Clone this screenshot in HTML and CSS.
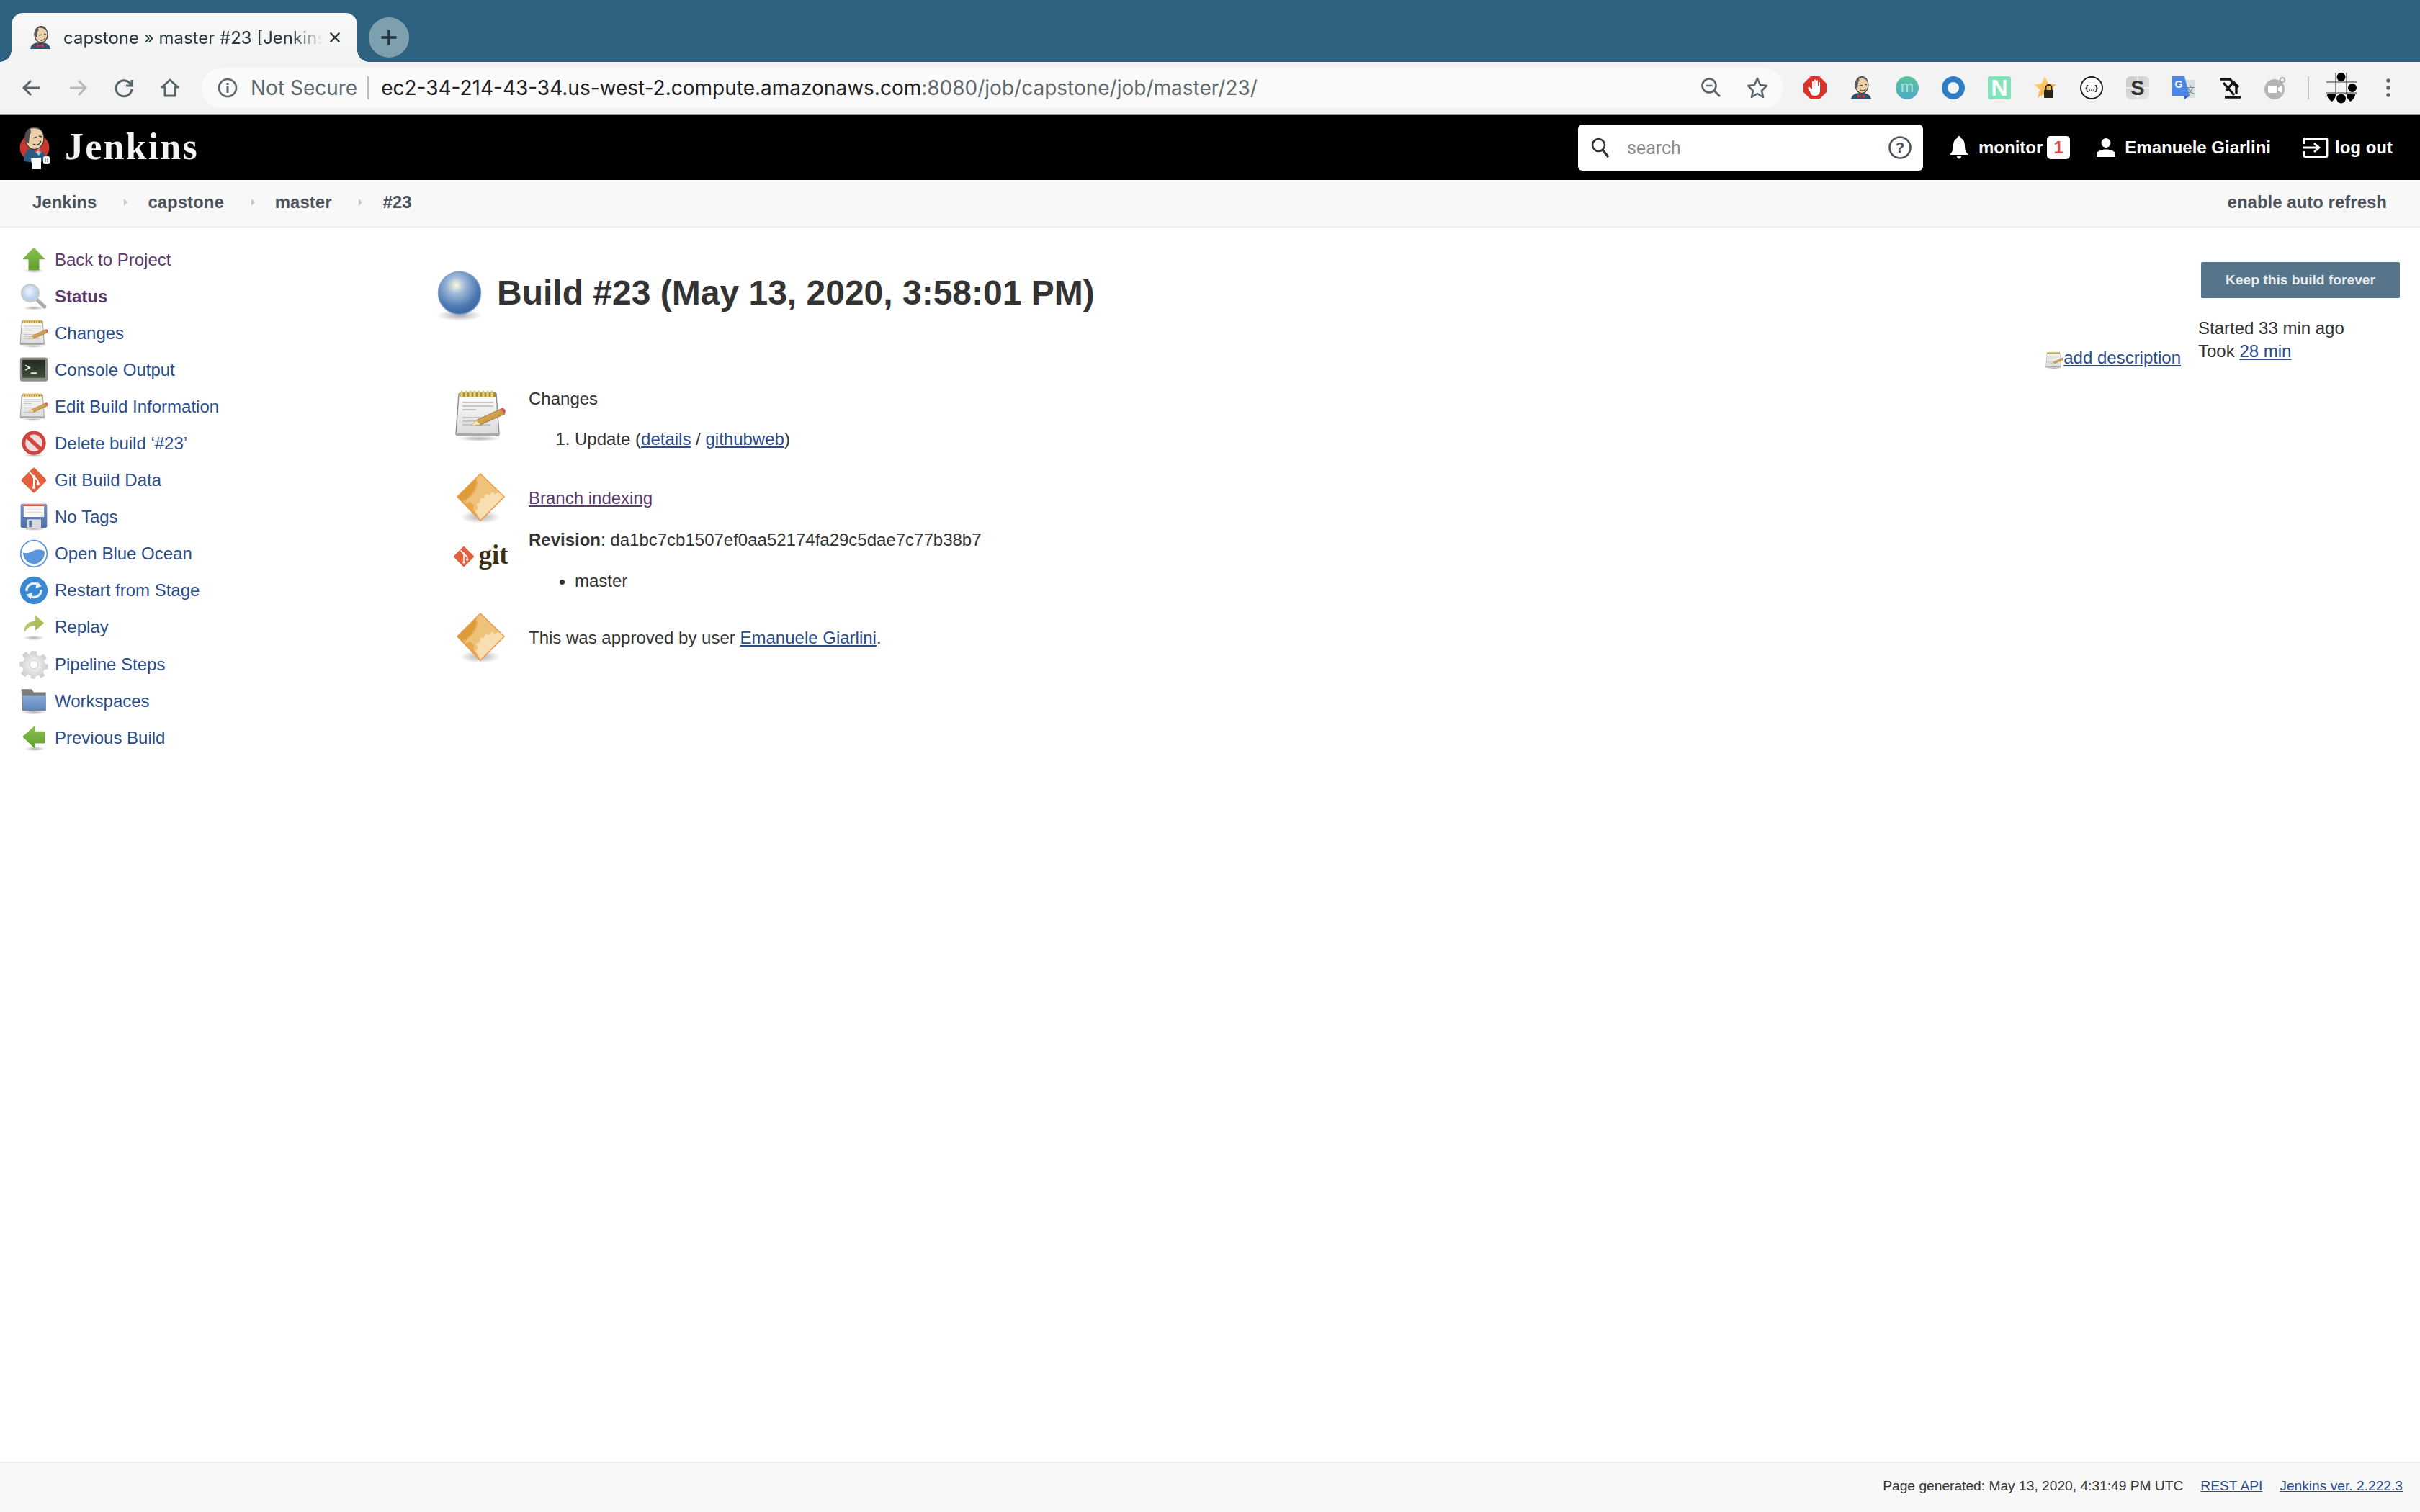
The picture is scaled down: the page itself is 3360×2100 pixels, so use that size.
FILE: index.html
```html
<!DOCTYPE html>
<html lang="en">
<head>
<meta charset="utf-8">
<title>capstone » master #23 [Jenkins]</title>
<link rel="stylesheet" href="styles.css">
</head>
<body>
<svg class="defs" aria-hidden="true">
  <defs>
    <linearGradient id="gGreen" x1="0" y1="0" x2="0" y2="1"><stop offset="0" stop-color="#8cc152"/><stop offset="1" stop-color="#5fa02c"/></linearGradient>
    <linearGradient id="gPad" x1="0" y1="0" x2="0" y2="1"><stop offset="0" stop-color="#fdfdfd"/><stop offset="1" stop-color="#dcdcdc"/></linearGradient>
    <linearGradient id="gPencil" x1="0" y1="0" x2="1" y2="1"><stop offset="0" stop-color="#eec36c"/><stop offset="1" stop-color="#b57f2c"/></linearGradient>
    <linearGradient id="gScreen" x1="0" y1="0" x2="0" y2="1"><stop offset="0" stop-color="#1f2a1c"/><stop offset="1" stop-color="#3f4f38"/></linearGradient>
    <linearGradient id="gFloppy" x1="0" y1="0" x2="0" y2="1"><stop offset="0" stop-color="#7391c4"/><stop offset="1" stop-color="#4d6ea8"/></linearGradient>
    <linearGradient id="gFolder" x1="0" y1="0" x2="0" y2="1"><stop offset="0" stop-color="#87a9d8"/><stop offset="1" stop-color="#5f86bd"/></linearGradient>
    <linearGradient id="gReplay" x1="0" y1="0" x2="1" y2="1"><stop offset="0" stop-color="#c9d77f"/><stop offset="1" stop-color="#94ad3c"/></linearGradient>
    <linearGradient id="gTeal" x1="0" y1="0" x2="0" y2="1"><stop offset="0" stop-color="#5cc3a0"/><stop offset="1" stop-color="#4fa9c6"/></linearGradient>
    <linearGradient id="gStar" x1="0" y1="0" x2="1" y2="1"><stop offset="0" stop-color="#fde08a"/><stop offset="1" stop-color="#f0a029"/></linearGradient>
    <linearGradient id="gSnag" x1="0" y1="0" x2="1" y2="1"><stop offset="0" stop-color="#c9c9c9"/><stop offset="1" stop-color="#e6e6e6"/></linearGradient>
    <radialGradient id="gBall" cx="0.42" cy="0.32" r="0.7"><stop offset="0" stop-color="#fbf9dd"/><stop offset="0.3" stop-color="#9db8d8"/><stop offset="0.75" stop-color="#4a77b0"/><stop offset="1" stop-color="#3a66a4"/></radialGradient>
    <radialGradient id="gGlass" cx="0.45" cy="0.4" r="0.6"><stop offset="0" stop-color="#eef5fc"/><stop offset="1" stop-color="#a9c6e8"/></radialGradient>
    <radialGradient id="gGear" cx="0.5" cy="0.5" r="0.6"><stop offset="0" stop-color="#f8f8f8"/><stop offset="1" stop-color="#c9c9c9"/></radialGradient>
    <radialGradient id="gShadow" cx="0.5" cy="0.5" r="0.5"><stop offset="0" stop-color="#000" stop-opacity=".32"/><stop offset="1" stop-color="#000" stop-opacity="0"/></radialGradient>

    <symbol id="i-up" viewBox="0 0 48 48"><ellipse cx="24" cy="42" rx="17" ry="4" fill="url(#gShadow)"/><path d="M24 3 43 23H33V41H15V23H5Z" fill="url(#gGreen)"/></symbol>
    <symbol id="i-left" viewBox="0 0 48 48"><ellipse cx="26" cy="42" rx="17" ry="4" fill="url(#gShadow)"/><path d="M5 22 26 3V13H42V33H26V42Z" fill="url(#gGreen)"/></symbol>
    <symbol id="i-search" viewBox="0 0 48 48"><ellipse cx="24" cy="43" rx="18" ry="3.5" fill="url(#gShadow)"/><path d="M27 27 42 41" stroke="#a6a9ac" stroke-width="6" stroke-linecap="round"/><circle cx="18" cy="18" r="14" fill="url(#gGlass)" stroke="#c9cdd2" stroke-width="3.5"/></symbol>
    <symbol id="i-notepad" viewBox="0 0 72 72"><ellipse cx="34" cy="68" rx="30" ry="4" fill="url(#gShadow)"/><path d="M6 6H58L62 62H2Z" fill="url(#gPad)" stroke="#8b8b8b" stroke-width="1.4"/><rect x="2" y="60" width="60" height="5" fill="#a9a9a9"/><rect x="7" y="4" width="50" height="6" fill="#a98d3d"/><path d="M10 3V9M16 3V9M22 3V9M28 3V9M34 3V9M40 3V9M46 3V9M52 3V9" stroke="#e9cf6f" stroke-width="3.4" stroke-linecap="round"/><path d="M11 18H54M11 23H54M11 28H30M11 39H50M11 44H30M11 49H50" stroke="#b9b9b9" stroke-width="1.4"/><path d="M23 50 30 43 64 27 70 34 36 49Z" fill="url(#gPencil)" stroke="#8d6a2a" stroke-width=".8"/><path d="M23 50 30 43 36 49Z" fill="#f4dfb7"/><path d="M64 27 70 34 71 29 67 25Z" fill="#e0524d"/></symbol>
    <symbol id="i-term" viewBox="0 0 48 48"><rect x="1" y="3" width="46" height="40" rx="4" fill="#8d8f88"/><rect x="5" y="7" width="38" height="30" fill="url(#gScreen)"/><path d="M10 16 17 20 10 24M19 29H29" stroke="#e6ebe3" stroke-width="2.2" fill="none"/><circle cx="32" cy="40" r="1" fill="#8ad45a"/></symbol>
    <symbol id="i-delete" viewBox="0 0 48 48"><ellipse cx="24" cy="44" rx="18" ry="3" fill="url(#gShadow)"/><circle cx="24" cy="23" r="17" fill="#f3dddc" stroke="#cf4641" stroke-width="6"/><path d="M12 12 36 34" stroke="#cf4641" stroke-width="6.5"/></symbol>
    <symbol id="i-git" viewBox="0 0 48 48"><rect x="8.5" y="8.5" width="31" height="31" rx="3" transform="rotate(45 24 24)" fill="#e2603e"/><path d="M17 11 31 25M24 18V35M31 25V30" stroke="#fff" stroke-width="2.4" fill="none"/><circle cx="24" cy="18" r="2.6" fill="#fff"/><circle cx="24" cy="36" r="2.6" fill="#fff"/><circle cx="31" cy="30" r="2.6" fill="#fff"/></symbol>
    <symbol id="i-floppy" viewBox="0 0 48 48"><ellipse cx="24" cy="44" rx="20" ry="3" fill="url(#gShadow)"/><rect x="2" y="2" width="44" height="40" rx="3" fill="url(#gFloppy)"/><rect x="7" y="3" width="34" height="21" fill="#fbfbfb"/><rect x="7" y="3" width="34" height="3" fill="#d9523e"/><path d="M10 11H38M10 16H38" stroke="#dddddd" stroke-width="1.3"/><rect x="12" y="28" width="24" height="14" fill="#dadada"/><rect x="16" y="30" width="5" height="11" fill="#5d7aab"/></symbol>
    <symbol id="i-ocean" viewBox="0 0 48 48"><circle cx="24" cy="24" r="22" fill="#fff" stroke="#5b96dc" stroke-width="2"/><path d="M6 22C14 25 18 21 26 18 33 16 38 18 42 20 43 32 34 41 24 41 14 41 6 33 6 22Z" fill="#5b96dc"/></symbol>
    <symbol id="i-restart" viewBox="0 0 48 48"><circle cx="24" cy="24" r="23" fill="#3a87d2"/><path d="M12 25C11 15 23 9 32 15M36 23C37 33 25 39 16 33" stroke="#e6f1fa" stroke-width="4" fill="none"/><path d="M29 9 37 17 27 20ZM19 39 11 31 21 28Z" fill="#e6f1fa"/></symbol>
    <symbol id="i-replay" viewBox="0 0 48 48"><ellipse cx="24" cy="42" rx="18" ry="4" fill="url(#gShadow)"/><path d="M8 33C7 22 14 14 26 14V4L41 17 26 30V22C18 21 13 25 8 33Z" fill="url(#gReplay)"/></symbol>
    <symbol id="i-gear" viewBox="0 0 48 48"><path d="M20 2H28L29 9 34 11 40 7 45 13 40 18 43 23 47 24V31L41 32 39 37 42 42 36 46 32 41 27 43 26 47H20L19 42 14 40 9 44 3 39 7 33 5 28 1 27V20L7 19 9 14 5 8 11 3 16 8Z" fill="url(#gGear)" stroke="#d2d2d2"/><circle cx="24" cy="24" r="7" fill="#fff" stroke="#c4c4c4"/></symbol>
    <symbol id="i-folder" viewBox="0 0 48 48"><ellipse cx="24" cy="42" rx="22" ry="3" fill="url(#gShadow)"/><path d="M3 4H20L24 9H44V40H5Z" fill="#7c7c7c"/><path d="M5 14H44V39H7Z" fill="url(#gFolder)"/></symbol>
    <symbol id="i-ball" viewBox="0 0 64 72"><ellipse cx="32" cy="62" rx="31" ry="8" fill="url(#gShadow)"/><circle cx="32" cy="31" r="29.500" fill="url(#gBall)" stroke="#7f9fd0" stroke-width="1.5"/></symbol>
    <symbol id="i-diamond" viewBox="0 0 72 72"><ellipse cx="36" cy="62" rx="28" ry="9" fill="url(#gShadow)"/><path d="M36 2 69 34 36 67 4 34Z" fill="#eec27a"/><path d="M4 34 30 8 33 15 31 21 28 27 24 33 18 37 14 44Z" fill="#e7ae58"/><path d="M4 34 30 9 30 15C29 24 22 36 10 40Z" fill="#dd9c3a"/><path d="M69 34 61 27 57 31 52 27 48 32 43 30 41 36 36 36 35 42 30 44 33 50 29 54 33 60 36 67Z" fill="#f8dfb2"/><path d="M14 44 22 41 27 46 26 52 30 57 36 67Z" fill="#e5a84a"/><path d="M36 2 69 34 36 67 4 34Z" fill="none" stroke="#ef9a4c" stroke-width="1.6"/></symbol>
    <symbol id="i-jenkins" viewBox="0 0 32 32"><path d="M2 32C3 26 7 23 16 23 25 23 29 26 30 32Z" fill="#2f5070"/><path d="M11 25 16 27 21 25 21 30 16 28 11 30Z" fill="#d33833"/><ellipse cx="17" cy="12" rx="9" ry="11.500" fill="#ecd0aa" stroke="#3a3a3a" stroke-width="1.100"/><path d="M8 15C6 6 11 .5 17 .5 21 .5 24 2.500 25 6 20 3 15 3 12 8L11 16Z" fill="#5c5a5c"/><path d="M13 3C17 2 21 3 23 6 19 5 16 5 14 8Z" fill="#ecd0aa"/><path d="M14 13 18 12M21 11 24 12M15 19C18 21 21 20 23 17" stroke="#3a3a3a" stroke-width="1.100" fill="none"/></symbol>
    <symbol id="i-logo" viewBox="0 0 44 60"><ellipse cx="21" cy="30" rx="20.500" ry="19" fill="#c8372f"/><path d="M6 49C6 37 12 30 20 30 30 30 36 36 37 49L28 50H14Z" fill="#2b5a7f"/><path d="M21 31 27 30 32 34 27 41 23 37Z" fill="#9fc6da"/><path d="M20 30 26 33 32 30 31 37 26 34 21 37Z" fill="#d33833"/><ellipse cx="21" cy="17" rx="13" ry="15.500" fill="#eccfa9" stroke="#2e2e2e" stroke-width="1.200"/><path d="M8 22C5 9 12 1.500 21 1.500 24 1.500 28 2.500 30 5 22 4 15 7 14 14L13 24Z" fill="#4e4c4e"/><path d="M15 4C21 2 28 4 31 8 26 7 20 8 17 13Z" fill="#eccfa9"/><path d="M19 17 24 15M27 14 31 15M19 25C23 28 28 26 30 21" stroke="#2e2e2e" stroke-width="1.300" fill="none"/><path d="M16 45 30 44 30 60 18 60Z" fill="#fafafa"/><rect x="33" y="42" width="9" height="11" rx="2.500" fill="#f3f3f3"/><path d="M36 45V50M39 45V50" stroke="#555" stroke-width="1"/></symbol>
  </defs>
</svg>

<div class="tabstrip">
  <div class="tab">
    <svg class="fav"><use href="#i-jenkins"/></svg>
    <span class="tab-title">capstone » master #23 [Jenkins]</span>
    <svg class="tab-close" viewBox="0 0 20 20"><path d="M3 3 17 17M17 3 3 17" stroke="#28373c" stroke-width="2.6"/></svg>
  </div>
  <div class="newtab"><svg viewBox="0 0 24 24"><path d="M12 3V21M3 12H21" stroke="#23333b" stroke-width="3"/></svg></div>
</div>

<div class="toolbar">
  <div class="nav">
    <svg class="nav-btn" viewBox="0 0 32 32"><path d="M27 16H6M15 6 5 16 15 26" fill="none" stroke="#57646a" stroke-width="3"/></svg>
    <svg class="nav-btn" viewBox="0 0 32 32"><path d="M5 16H26M17 6 27 16 17 26" fill="none" stroke="#b4babc" stroke-width="3"/></svg>
    <svg class="nav-btn" viewBox="0 0 32 32"><path d="M26 12A11 11 0 1 0 27 18M27 5V13H19" fill="none" stroke="#57646a" stroke-width="3"/></svg>
    <svg class="nav-btn" viewBox="0 0 32 32"><path d="M16 5 5 15H9V27H23V15H27Z" fill="none" stroke="#57646a" stroke-width="3" stroke-linejoin="round"/></svg>
  </div>
  <div class="omnibox">
    <svg class="omni-icon" viewBox="0 0 32 32"><circle cx="16" cy="16" r="12" fill="none" stroke="#5d6a70" stroke-width="2.6"/><path d="M16 14V23M16 9V12" stroke="#5d6a70" stroke-width="3"/></svg>
    <span class="not-secure">Not Secure</span>
    <span class="omni-sep"></span>
    <span class="url">ec2-34-214-43-34.us-west-2.compute.amazonaws.com<span class="url-path">:8080/job/capstone/job/master/23/</span></span>
    <div class="omni-right">
      <svg class="omni-icon" viewBox="0 0 32 32"><circle cx="13" cy="13" r="9.5" fill="none" stroke="#57646a" stroke-width="2.6"/><path d="M20 20 28 28" stroke="#57646a" stroke-width="3"/><path d="M8.5 13H17.5" stroke="#57646a" stroke-width="2.4"/></svg>
      <svg class="omni-icon" viewBox="0 0 32 32"><path d="M16 3 20 12 29 13 22 20 24 29 16 24 8 29 10 20 3 13 12 12Z" fill="none" stroke="#57646a" stroke-width="2.6" stroke-linejoin="round"/></svg>
    </div>
  </div>
  <div class="exts">
    <div class="ext"><svg viewBox="0 0 32 32"><path d="M10 0H22L32 10V22L22 32H10L0 22V10Z" fill="#d9342b"/><path d="M11 25 6 16 8 14.500 12 18V7H14V14H15V4.500H17V14H18V5.500H20V14H21V8H23V20C23 24 20 27 17 27 14 27 12 27 11 25Z" fill="#fff"/></svg></div>
    <div class="ext"><svg><use href="#i-jenkins"/></svg></div>
    <div class="ext"><svg viewBox="0 0 32 32"><circle cx="16" cy="16" r="16" fill="url(#gTeal)"/><text x="16" y="22" class="ext-t ext-m" text-anchor="middle">m</text></svg></div>
    <div class="ext"><svg viewBox="0 0 32 32"><circle cx="16" cy="16" r="12" fill="none" stroke="#2f7dc3" stroke-width="8"/></svg></div>
    <div class="ext"><svg viewBox="0 0 32 32"><rect width="32" height="32" rx="3" fill="#85e3bb"/><text x="16" y="27" class="ext-t ext-n" text-anchor="middle">N</text></svg></div>
    <div class="ext"><svg viewBox="0 0 32 32"><path d="M15 0 19.500 10 31 11.500 22 18.500 25 30 15 24 5 30 8 18.500 0 11.500 10.500 10Z" fill="url(#gStar)"/><rect x="14" y="19" width="13" height="11" rx="1" fill="#2a2413"/><path d="M16.500 19V16A4 4 0 0 1 24.500 16V19" fill="none" stroke="#2a2413" stroke-width="2"/></svg></div>
    <div class="ext"><svg viewBox="0 0 32 32"><circle cx="16" cy="16" r="15" fill="#fff" stroke="#1d1d1d" stroke-width="2"/><text x="16" y="20" class="ext-t ext-b" text-anchor="middle">{...}</text></svg></div>
    <div class="ext"><svg viewBox="0 0 32 32"><rect width="32" height="32" rx="6" fill="url(#gSnag)"/><path d="M16 0V32M0 16H32" stroke="#f4f4f4" stroke-width="1.500"/><text x="16" y="26" class="ext-t ext-s" text-anchor="middle">S</text></svg></div>
    <div class="ext"><svg viewBox="0 0 32 32"><path d="M14 5H32V30H18Z" fill="#dcdfe0"/><path d="M0 0H17L24 27H0Z" fill="#4a86e8"/><path d="M16 27H24L17 32Z" fill="#3a5ec9"/><text x="9" y="16" class="ext-t ext-g" text-anchor="middle">G</text><text x="25" y="23" class="ext-cjk" text-anchor="middle">文</text></svg></div>
    <div class="ext"><svg viewBox="0 0 32 32"><path d="M2 4H16L25 14V24M7 9 22 26M11 20 15 15M15 15 21 8 28 15M9 29H31" fill="none" stroke="#151515" stroke-width="3.400"/></svg></div>
    <div class="ext"><svg viewBox="0 0 32 32"><circle cx="14" cy="18" r="14" fill="#b5b5b5"/><rect x="5" y="13" width="13" height="10" rx="2" fill="#fff"/><path d="M19 16 24 13V23L19 20Z" fill="#fff"/><circle cx="25" cy="5" r="3.500" fill="#e4e4e4" stroke="#7f7f7f"/></svg></div>
  </div>
  <span class="tool-sep"></span>
  <div class="avatar"><svg viewBox="0 0 44 44"><path d="M0 14H42M0 29H42M13 1V30M28 1V30" stroke="#333" stroke-width="1"/><circle cx="20.500" cy="7" r="6"/><circle cx="36" cy="22" r="6"/><circle cx="20.500" cy="37" r="6.500"/><path d="M1 31H13C13 36 10 39 8 41 4 39 1 35 1 31ZM40 31H28C28 36 31 39 33 41 37 39 40 35 40 31Z"/></svg></div>
  <div class="kebab"><svg viewBox="0 0 8 32"><circle cx="4" cy="6" r="2.7" fill="#57646a"/><circle cx="4" cy="16" r="2.7" fill="#57646a"/><circle cx="4" cy="26" r="2.7" fill="#57646a"/></svg></div>
</div>

<header class="jk-header">
  <a class="logo"><svg class="logo-img"><use href="#i-logo"/></svg><span class="logo-text">Jenkins</span></a>
  <div class="search">
    <svg class="s-icon" viewBox="0 0 26 28"><circle cx="10.5" cy="10.5" r="8.5" fill="none" stroke="#333" stroke-width="2.6"/><path d="M16 17 24 27" stroke="#333" stroke-width="3.4"/></svg>
    <span class="s-text">search</span>
    <svg class="s-help" viewBox="0 0 32 32"><circle cx="16" cy="16" r="14.5" fill="none" stroke="#4d545d" stroke-width="2.6"/><text x="16" y="23" class="help-q" text-anchor="middle">?</text></svg>
  </div>
  <svg class="bell" viewBox="0 0 26 32"><path d="M13 0C15 0 15.5 1.5 15.5 3 20 4.500 21 9 21 14 21 19 22.500 22 25 25V26H1V25C3.500 22 5 19 5 14 5 9 6 4.500 10.500 3 10.500 1.500 11 0 13 0ZM10 28H16C16 30 14.500 31.500 13 31.500 11.500 31.500 10 30 10 28Z" fill="#fff"/></svg>
  <span class="hd-text monitor">monitor</span>
  <span class="badge">1</span>
  <svg class="user" viewBox="0 0 26 26"><circle cx="13" cy="6.500" r="6.500" fill="#fff"/><path d="M0 26V22C0 18 6 15.500 13 15.500 20 15.500 26 18 26 22V26Z" fill="#fff"/></svg>
  <span class="hd-text name">Emanuele Giarlini</span>
  <svg class="logout" viewBox="0 0 36 28"><path d="M2 9V3Q2 1.500 3.500 1.500H32.500Q34 1.500 34 3V25Q34 26.500 32.500 26.500H3.500Q2 26.500 2 25V19" fill="none" stroke="#fff" stroke-width="2.8"/><path d="M0 14H22M16 8 23 14 16 20" fill="none" stroke="#fff" stroke-width="2.8"/></svg>
  <span class="hd-text logout-text">log out</span>
</header>

<nav class="crumbs">
  <a class="crumb">Jenkins</a><span class="crumb-sep"></span>
  <a class="crumb">capstone</a><span class="crumb-sep"></span>
  <a class="crumb">master</a><span class="crumb-sep"></span>
  <a class="crumb">#23</a>
  <a class="crumb auto-refresh">enable auto refresh</a>
</nav>

<main class="page">
  <aside class="side">
    <a class="side-row visited"><svg class="side-ic"><use href="#i-up"/></svg>Back to Project</a>
    <a class="side-row visited strong"><svg class="side-ic"><use href="#i-search"/></svg>Status</a>
    <a class="side-row"><svg class="side-ic"><use href="#i-notepad"/></svg>Changes</a>
    <a class="side-row"><svg class="side-ic"><use href="#i-term"/></svg>Console Output</a>
    <a class="side-row"><svg class="side-ic"><use href="#i-notepad"/></svg>Edit Build Information</a>
    <a class="side-row"><svg class="side-ic"><use href="#i-delete"/></svg>Delete build ‘#23’</a>
    <a class="side-row"><svg class="side-ic"><use href="#i-git"/></svg>Git Build Data</a>
    <a class="side-row"><svg class="side-ic"><use href="#i-floppy"/></svg>No Tags</a>
    <a class="side-row"><svg class="side-ic"><use href="#i-ocean"/></svg>Open Blue Ocean</a>
    <a class="side-row"><svg class="side-ic"><use href="#i-restart"/></svg>Restart from Stage</a>
    <a class="side-row"><svg class="side-ic"><use href="#i-replay"/></svg>Replay</a>
    <a class="side-row"><svg class="side-ic"><use href="#i-gear"/></svg>Pipeline Steps</a>
    <a class="side-row"><svg class="side-ic"><use href="#i-folder"/></svg>Workspaces</a>
    <a class="side-row"><svg class="side-ic"><use href="#i-left"/></svg>Previous Build</a>
  </aside>

  <section class="content">
    <div class="title-row">
      <svg class="ball"><use href="#i-ball"/></svg>
      <h1 class="title">Build #23 (May 13, 2020, 3:58:01 PM)</h1>
    </div>
    <div class="desc"><svg class="desc-ic"><use href="#i-notepad"/></svg><a class="link">add description</a></div>

    <div class="row row-changes">
      <svg class="big-ic"><use href="#i-notepad"/></svg>
      <div>
        <div class="line">Changes</div>
        <ol class="list"><li>Update (<a class="link">details</a> / <a class="link">githubweb</a>)</li></ol>
      </div>
    </div>
    <div class="row row-mid row-branch">
      <svg class="big-ic"><use href="#i-diamond"/></svg>
      <div class="line"><a class="link link-visited">Branch indexing</a></div>
    </div>
    <div class="row row-git">
      <div class="git-logo"><svg class="git-mark"><use href="#i-git"/></svg><span class="git-word">git</span></div>
      <div>
        <div class="line"><b>Revision</b>: da1bc7cb1507ef0aa52174fa29c5dae7c77b38b7</div>
        <ul class="list list-ul"><li>master</li></ul>
      </div>
    </div>
    <div class="row row-mid row-approve">
      <svg class="big-ic"><use href="#i-diamond"/></svg>
      <div class="line">This was approved by user <a class="link">Emanuele Giarlini</a>.</div>
    </div>
  </section>

  <aside class="info">
    <div class="keep">Keep this build forever</div>
    <div class="line">Started 33 min ago</div>
    <div class="line">Took <a class="link">28 min</a></div>
  </aside>
</main>

<footer class="foot">
  <span>Page generated: May 13, 2020, 4:31:49 PM UTC</span>
  <a class="link">REST API</a>
  <a class="link">Jenkins ver. 2.222.3</a>
</footer>
</body>
</html>
```

FILE: styles.css
```css
* { box-sizing: border-box; }
html, body { margin: 0; height: 100%; }
body {
  display: flex;
  flex-direction: column;
  height: 100vh;
  overflow: hidden;
  background: #fff;
  color: #333;
  font-family: "Liberation Sans", Arial, sans-serif;
  font-size: 24px;
}
.defs { position: absolute; width: 0; height: 0; }
svg { display: block; flex: none; }

/* browser tab strip */
.tabstrip {
  display: flex;
  align-items: flex-end;
  height: 86px;
  padding-left: 16px;
  background: #2f6280;
}
.tab {
  position: relative;
  display: flex;
  align-items: center;
  width: 480px;
  height: 68px;
  padding: 0 22px 0 24px;
  background: linear-gradient(#f8f8f8, #f3f3f3);
  border-radius: 16px 16px 0 0;
}
.tab::before,
.tab::after {
  content: "";
  position: absolute;
  bottom: 0;
  width: 16px;
  height: 16px;
}
.tab::before { left: -16px; background: radial-gradient(circle at 0 0, transparent 15.5px, #f3f3f3 16px); }
.tab::after { right: -16px; background: radial-gradient(circle at 100% 0, transparent 15.5px, #f3f3f3 16px); }
.fav { width: 32px; height: 32px; }
.tab-title {
  flex: 1;
  margin-left: 16px;
  overflow: hidden;
  white-space: nowrap;
  color: #28373c;
  font-family: Inter, sans-serif;
  font-size: 24px;
  -webkit-mask-image: linear-gradient(to right, #000 88%, transparent 100%);
  mask-image: linear-gradient(to right, #000 88%, transparent 100%);
}
.tab-close { width: 18px; height: 18px; margin-left: 8px; }
.newtab {
  display: flex;
  align-items: center;
  justify-content: center;
  width: 56px;
  height: 56px;
  margin: 0 0 6px 16px;
  border-radius: 50%;
  background: #7d9fae;
}
.newtab svg { width: 28px; height: 28px; }

/* browser toolbar */
.toolbar {
  display: flex;
  align-items: center;
  height: 74px;
  padding: 0 12px;
  background: #f3f3f3;
  border-bottom: 2px solid #8f8f8f;
}
.nav { display: flex; }
.nav-btn { width: 32px; height: 32px; margin: 0 16px; }
.omnibox {
  display: flex;
  flex: 1;
  align-items: center;
  height: 56px;
  margin-left: 12px;
  padding: 0 20px;
  border-radius: 28px;
  background: #fafafa;
  font-family: Inter, sans-serif;
  font-size: 28px;
  white-space: nowrap;
}
.omni-icon { width: 32px; height: 32px; }
.not-secure { margin-left: 16px; color: #5d6a70; }
.omni-sep { width: 2px; height: 32px; margin: 0 17px 0 14px; background: #b9bdbf; }
.url { color: #202124; }
.url-path { color: #60686c; }
.omni-right { display: flex; gap: 32px; margin-left: auto; }
.exts { display: flex; margin-left: 12px; }
.ext { display: flex; align-items: center; justify-content: center; width: 64px; height: 48px; }
.ext svg { width: 32px; height: 32px; }
.ext-t { font-family: "Liberation Sans", sans-serif; font-weight: 700; }
.ext-m { fill: #a9e2dc; font-size: 22px; font-weight: 400; }
.ext-n { fill: #fff; font-size: 32px; }
.ext-b { fill: #1d1d1d; font-size: 11px; }
.ext-s { fill: #333; font-size: 29px; }
.ext-g { fill: #fff; font-size: 14px; }
.ext-cjk { fill: #76858f; font-family: "Noto Sans CJK SC", sans-serif; font-size: 13px; }
.tool-sep { width: 2px; height: 32px; margin: 0 14px 0 12px; background: #c4c7c9; }
.avatar { display: flex; justify-content: center; width: 64px; }
.avatar svg { width: 44px; height: 44px; }
.kebab { display: flex; justify-content: center; width: 64px; }
.kebab svg { width: 8px; height: 32px; }

/* Jenkins header */
.jk-header {
  display: flex;
  align-items: center;
  height: 90px;
  padding: 0 38px 0 27px;
  background: #000;
  color: #fff;
}
.logo { display: flex; align-items: center; }
.logo-img { width: 44px; height: 60px; }
.logo-text {
  margin: 0 0 3px 19px;
  font-family: "Liberation Serif", serif;
  font-size: 52px;
  font-weight: 700;
  letter-spacing: 2.2px;
  color: #f4f4f4;
}
.search {
  display: flex;
  align-items: center;
  width: 479px;
  height: 64px;
  margin-left: auto;
  padding: 0 16px 0 18px;
  border-radius: 6px;
  background: #fff;
}
.s-icon { width: 26px; height: 28px; }
.s-text { flex: 1; margin-left: 24px; color: #8c8c8c; font-family: Roboto, sans-serif; font-size: 25px; }
.s-help { width: 32px; height: 32px; }
.help-q { fill: #4d545d; font-size: 21px; font-weight: 700; font-family: "Liberation Sans", sans-serif; }
.bell { width: 26px; height: 32px; margin-left: 37px; }
.hd-text { font-size: 24px; font-weight: 700; white-space: nowrap; }
.monitor { margin-left: 14px; }
.badge {
  display: flex;
  align-items: center;
  justify-content: center;
  width: 32px;
  height: 32px;
  margin-left: 6px;
  border-radius: 5px;
  background: #fff;
  color: #e0494a;
  font-weight: 700;
  font-size: 24px;
}
.user { width: 26px; height: 26px; margin-left: 37px; }
.name { margin-left: 13px; }
.logout { width: 36px; height: 28px; margin-left: 44px; }
.logout-text { margin-left: 9px; }

/* breadcrumbs */
.crumbs {
  display: flex;
  align-items: center;
  height: 66px;
  padding: 0 46px 2px 45px;
  border-bottom: 2px solid #eff0f2;
  background: #f8f8f8;
}
.crumb { color: #4d545d; font-weight: 700; white-space: nowrap; }
.crumb-sep {
  width: 0;
  height: 0;
  margin: 0 28px 0 38px;
  border-left: 5px solid #c4c7cb;
  border-top: 5px solid transparent;
  border-bottom: 5px solid transparent;
}
.auto-refresh { margin-left: auto; }

/* page body */
.page { display: flex; flex: 1; min-height: 0; }
.side {
  display: flex;
  flex-direction: column;
  width: 600px;
  padding: 19px 0 0 27px;
}
.side-row {
  display: flex;
  align-items: center;
  gap: 9px;
  height: 51.1px;
  color: #2a4d8a;
}
.side-ic { width: 40px; height: 40px; }
.visited { color: #5c3a6c; }
.strong { font-weight: 700; }

.content { flex: 1; padding-top: 59px; }
.title-row { display: flex; align-items: center; height: 64px; padding-left: 6px; }
.ball { width: 64px; height: 72px; margin-top: 10px; }
.title { margin: 0 0 0 20px; color: #333; font-size: 48px; font-weight: 700; line-height: 64px; white-space: nowrap; }
.desc {
  display: flex;
  justify-content: flex-end;
  align-items: center;
  height: 32px;
  margin-top: 42px;
  padding-right: 12px;
}
.desc-ic { width: 25px; height: 25px; margin-top: 6px; }
.line { line-height: 32px; }
.link { color: #2a4d8a; text-decoration: underline; }
.link-visited { color: #5c3a6c; }

.row { display: grid; grid-template-columns: 134px 1fr; justify-items: start; }
.row > svg { justify-self: center; }
.row-mid { align-items: center; }
.row-changes { margin-top: 25px; }
.row-branch { margin-top: 30px; }
.row-git { margin-top: 6px; }
.row-approve { margin-top: 27px; }
.big-ic { width: 72px; height: 72px; }
.row-changes .big-ic { margin-top: 3px; }
.list { margin: 24px 0 0; padding-left: 64px; line-height: 32px; }
.list-ul { margin-top: 25px; }
.git-logo { display: flex; align-items: center; justify-self: center; height: 32px; margin-top: 23px; }
.git-mark { width: 32px; height: 32px; }
.git-word {
  margin: 0 0 5px 4px;
  color: #3d2f14;
  font-family: "Liberation Serif", serif;
  font-size: 37px;
  font-weight: 700;
  line-height: 32px;
}

.info { width: 320px; padding: 48px 0 0 12px; }
.keep {
  display: flex;
  align-items: center;
  justify-content: center;
  width: 276px;
  height: 50px;
  margin: 0 0 26px 4px;
  border-radius: 2px;
  background: #56758a;
  color: #e7ebee;
  font-size: 19.200px;
  font-weight: 700;
}

.foot {
  display: flex;
  justify-content: flex-end;
  align-items: center;
  gap: 24px;
  height: 70px;
  padding: 0 24px 4px 0;
  border-top: 2px solid #eff0f2;
  background: #f8f8f8;
  font-size: 19.200px;
}
```
